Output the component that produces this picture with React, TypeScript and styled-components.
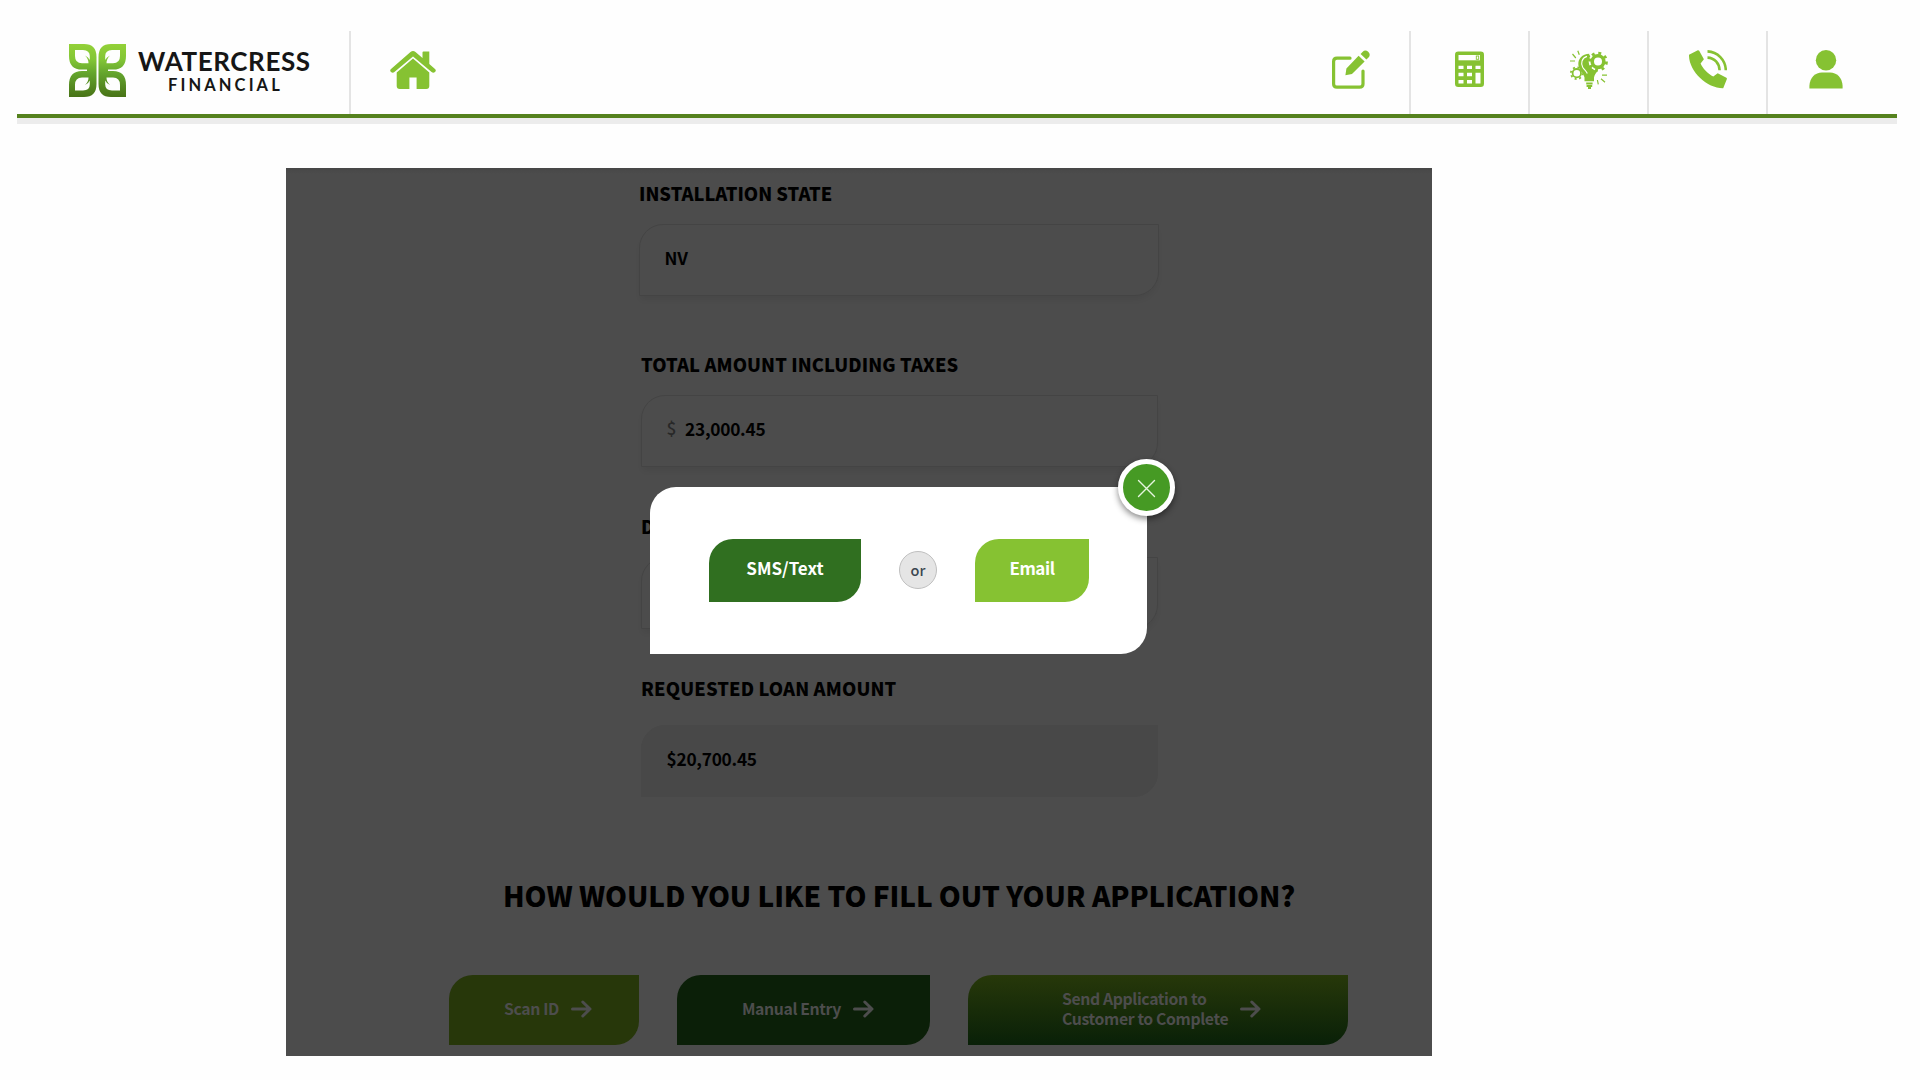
import React from "react";
import styled, { createGlobalStyle } from "styled-components";

const GlobalStyle = createGlobalStyle`
  * { box-sizing: border-box; }
  body {
    margin: 0;
    background: #fefefe;
    font-family: "Noto Sans CJK SC", "Noto Sans", sans-serif;
  }
`;

const GREEN = "#86c232";

const Page = styled.div`
  width: 1920px;
  height: 1080px;
  overflow: hidden;
  padding: 31px 23px 0 17px;
`;

const Header = styled.header`
  display: flex;
  height: 87px;
  border-bottom: 4px solid #55821e;
  box-shadow: 0 6px 0 #ececec;
`;

const Brand = styled.div`
  display: flex;
  width: 334px;
  padding: 13px 0 0 52px;
  gap: 12px;
  border-right: 2px solid #e4e4e4;
`;

const BrandText = styled.div`
  display: flex;
  flex-direction: column;
  font-family: Lato, sans-serif;
  color: #161616;
  white-space: nowrap;
`;

const BrandName = styled.span`
  font-size: 26px;
  font-weight: 700;
  line-height: 30px;
  letter-spacing: 0.6px;
  margin-top: 2px;
`;

const BrandSub = styled.span`
  font-size: 16.5px;
  font-weight: 700;
  line-height: 20px;
  letter-spacing: 3.1px;
  margin: -1px 0 0 30px;
`;

const HomeLink = styled.a`
  padding: 20px 0 0 39px;
  flex: 1;
`;

const Nav = styled.nav`
  display: flex;
`;

const NavItem = styled.a<{ $first?: boolean }>`
  display: flex;
  width: 119px;
  justify-content: center;
  padding: 19px 0 0;
  border-left: 2px solid ${(p) => (p.$first ? "transparent" : "#e4e4e4")};
  &:last-child { width: 131px; padding-right: 14px; }
`;

const Panel = styled.main`
  position: relative;
  width: 1146px;
  height: 888px;
  margin: 50px 0 0 269px;
  padding-top: 13px;
  background: linear-gradient(#474747, #4c4c4c 6px);
  color: #000;
`;

const Form = styled.form`
  display: flex;
  flex-direction: column;
  width: 520px;
  margin-left: 353px;
`;

const Field = styled.div<{ $h: number; $inset?: boolean }>`
  height: ${(p) => p.$h}px;
  padding: ${(p) => (p.$inset ? "0 1px 0 2px" : "0")};
`;

const Label = styled.div<{ $ls?: number }>`
  font-size: 18.3px;
  font-weight: 900;
  line-height: 24px;
  letter-spacing: ${(p) => p.$ls ?? 0}px;
  white-space: nowrap;
`;

const Control = styled.div<{ $gap?: number; $filled?: boolean }>`
  display: flex;
  align-items: center;
  height: 72.5px;
  margin-top: ${(p) => p.$gap ?? 18.5}px;
  padding: 0 0 3px 24.5px;
  border: 1.5px solid ${(p) => (p.$filled ? "#484848" : "#444")};
  border-radius: 24px 0 24px 0;
  background: ${(p) => (p.$filled ? "#484848" : "transparent")};
  box-shadow: ${(p) => (p.$filled ? "none" : "0 5px 6px -2px rgba(0, 0, 0, 0.07)")};
  font-size: 17.3px;
  font-weight: 700;
  line-height: 24px;
`;

const Value = styled.span`
  letter-spacing: -0.25px;
`;

const Currency = styled.span`
  width: 18.5px;
  margin-bottom: 2px;
  color: #282828;
  font-weight: 500;
`;

const Question = styled.h2`
  margin: 0 0 0 217px;
  padding-top: 1px;
  font-size: 28px;
  font-weight: 900;
  line-height: 40px;
  letter-spacing: -0.08px;
  white-space: nowrap;
`;

const Choices = styled.div`
  display: flex;
  gap: 38px;
  margin: 60px 0 0 163px;
`;

const Choice = styled.button<{ $w: number; $bg: string; $pad: number }>`
  display: flex;
  align-items: center;
  width: ${(p) => p.$w}px;
  height: 70px;
  padding: 0 0 2px ${(p) => p.$pad}px;
  gap: 12px;
  border: 0;
  border-radius: 24px 0 24px 0;
  background: ${(p) => p.$bg};
  color: #4d4d4d;
  font: 700 15.8px/20.3px "Noto Sans CJK SC", "Noto Sans", sans-serif;
  letter-spacing: -0.38px;
  text-align: left;
  white-space: nowrap;
`;

const Dialog = styled.section`
  position: absolute;
  left: 364px;
  top: 319px;
  width: 497px;
  height: 166.5px;
  padding: 51.5px 0 0 59px;
  display: flex;
  align-items: flex-start;
  border-radius: 26px 0 26px 0;
  background: #fff;
`;

const DialogButton = styled.button<{ $w: number; $bg: string; $ls: number }>`
  width: ${(p) => p.$w}px;
  height: 63.5px;
  padding: 0 0 4px;
  border: 0;
  border-radius: 24px 0 24px 0;
  background: ${(p) => p.$bg};
  color: #fff;
  font: 700 17px/24px "Noto Sans CJK SC", "Noto Sans", sans-serif;
  letter-spacing: ${(p) => p.$ls}px;
`;

const Or = styled.span`
  display: flex;
  align-items: center;
  justify-content: center;
  width: 38px;
  height: 38px;
  margin: 12.5px 38px 0;
  padding-bottom: 1px;
  border: 1.5px solid #bfbfbf;
  border-radius: 50%;
  background: #e5e5e5;
  color: #3c4650;
  font-size: 14.5px;
  font-weight: 500;
  line-height: 20px;
`;

const Close = styled.button`
  position: absolute;
  right: -28px;
  top: -28px;
  width: 57px;
  height: 57px;
  padding: 2px 0 0;
  display: flex;
  align-items: center;
  justify-content: center;
  border: 5px solid #fff;
  border-radius: 50%;
  background: #469a24;
  box-shadow: 0 3px 6px rgba(0, 0, 0, 0.45);
`;

const leaf =
  "M0 0H15Q27.5 0 27.5 13V40Q27.5 53 15 53H0V41Q0 27 13 27H18V25.6H13Q0 25.6 0 12Z" +
  "M6 6V12Q6 19.3 13 19.3H19.5Q19.6 15 16 11.5Q19.5 13 20.8 16V12Q20.8 6.3 14 6Z" +
  "M6 46.5V41Q6 33.5 13 33.5H19.5Q19.6 37.5 16 41Q19.5 39.5 20.8 36.5V40.5Q20.8 46.3 14 46.5Z";

const LogoMark = () => (
  <svg width="57" height="53" viewBox="0 0 57 53">
    <defs>
      <linearGradient id="leafFill" gradientUnits="userSpaceOnUse" x1="0" y1="0" x2="0" y2="53">
        <stop offset="0" stopColor="#93d138" />
        <stop offset="0.3" stopColor="#82c536" />
        <stop offset="0.55" stopColor="#64a52d" />
        <stop offset="1" stopColor="#487317" />
      </linearGradient>
    </defs>
    <path d={leaf} fill="url(#leafFill)" fillRule="evenodd" />
    <path d={leaf} fill="url(#leafFill)" fillRule="evenodd" transform="translate(57 0) scale(-1 1)" />
  </svg>
);

const HomeIcon = () => (
  <svg width="46" height="38" viewBox="0 0 46 38" fill={GREEN}>
    <path d="M23 0Q24.3 0 25.5 1L32.5 7V1.5Q32.5.5 33.5.5H39.3V13L45 18Q46.6 19.6 45 21Q43.3 22.6 41.6 21L23 5.5L4.4 21Q2.7 22.6 1 21Q-.6 19.6 1 18L20.5 1Q21.7 0 23 0Z" />
    <path d="M23 7.6L39.3 21.6V35Q39.3 38 36.3 38H26.6V26.5H19.4V38H9.7Q6.7 38 6.7 35V21.6Z" />
  </svg>
);

const EditIcon = () => (
  <svg width="38" height="39" viewBox="0 0 38 39" fill={GREEN}>
    <path d="M18 8.2H5Q1.6 8.2 1.6 11.6V34Q1.6 37.2 5 37.2H27.5Q31 37.2 31 34V21" fill="none" stroke={GREEN} strokeWidth="3.2" strokeLinecap="round" />
    <path d="M26.6 5.8L32.6 11.6L20 24L13.4 25.2L14.4 18.4ZM28.6 4L30.5 2Q33.2-.7 36.2 1.7Q39.1 4.5 36.5 7.5L34.4 9.6Z" />
  </svg>
);

const CalculatorIcon = () => (
  <svg width="29" height="37" viewBox="0 0 29 37">
    <rect y="1.5" width="29" height="35.5" rx="3.3" fill={GREEN} />
    <g fill="#fff">
      <path d="M3.5 5H25V10.3H3.5Z" />
      <path d="M3.5 15.8H8.5V19H3.5ZM12 15.8H17V19H12ZM20.5 15.8H25.5V19H20.5ZM3.5 22.8H8.5V26.3H3.5ZM12 22.8H17V26.3H12ZM3.5 30H8.5V33.5H3.5ZM12 30H17V33.5H12ZM20.5 22.8H25.5V33.5H20.5Z" />
    </g>
    <rect x="21.3" y="6" width="2.4" height="3.3" fill="none" stroke={GREEN} strokeWidth="0.9" />
  </svg>
);

const IdeaIcon = () => (
  <svg width="38" height="39" viewBox="0 0 38 39" fill="none" stroke={GREEN}>
    <circle cx="6.8" cy="23.2" r="4.2" strokeWidth="1.8" />
    <circle cx="6.8" cy="23.2" r="5.9" strokeWidth="1.8" strokeDasharray="2 2.63" />
    <path d="M19.5 3.7C12 3.7 7.7 9 8.4 15.2C9 20.5 13.4 22.3 14.5 27.5V31.3H24V27.5C24.4 25 26 23 28 20.5L19 4Z" fill={GREEN} stroke="none" />
    <path d="M17 6.4C11.6 8 10.6 13.5 12.7 17.2C14.4 20 16.4 21 17.3 23.5" stroke="#fff" strokeWidth="1.1" />
    <circle cx="28" cy="11.6" r="9.4" fill="#fff" stroke="none" />
    <circle cx="28" cy="11.6" r="5.8" strokeWidth="3.6" />
    <circle cx="28" cy="11.6" r="8.5" strokeWidth="2.8" strokeDasharray="2.9 3.78" />
    <path d="M16.5 16L19.5 19L23 21.5L20.5 28" strokeWidth="3.4" />
    <path d="M16.2 33.5H22.6M16.6 36H22.2M18 38H21" strokeWidth="1.8" />
    <path d="M7.8.8L9.3 4.8M2.5 4L5.8 8M0 11H5M32 25.2H37M31 28.7L35 32.3M27.4 30L28.3 34.3" strokeWidth="1.2" />
  </svg>
);

const PhoneIcon = () => (
  <svg width="38" height="39" viewBox="0 0 38 39" fill={GREEN}>
    <path d="M0 4.7L8.8.3Q9.6 0 10.2.8L14.9 9.3L11.6 13.6C13.4 18.2 19 24 24.3 26.6L28.7 23.2L37.4 27.8Q38.2 28.4 37.8 29.2L34.2 38.2C18 38.4-.5 21 0 4.7Z" />
    <path d="M18.5 1.4C28.5 1.8 36.6 10 36.8 20.3M18.5 7.6C25.5 7.8 30.4 13.3 30.6 20.3" fill="none" stroke={GREEN} strokeWidth="2.6" />
  </svg>
);

const UserIcon = () => (
  <svg width="34" height="39" viewBox="0 0 34 39" fill={GREEN}>
    <circle cx="17" cy="10.3" r="10.2" />
    <path d="M.4 38.5V36C.8 27.5 6.2 22.6 13 22.6H21C27.8 22.6 33.2 27.5 33.6 36V38.5Z" />
  </svg>
);

const Arrow = () => (
  <svg width="21" height="18" viewBox="0 0 21 18" fill="none" stroke="#4d4d4d" strokeWidth="3" strokeLinecap="round" strokeLinejoin="round">
    <path d="M1.5 9H18.7M11.8 2L19 9L11.8 16" />
  </svg>
);

export default function App() {
  return (
    <Page>
      <GlobalStyle />
      <Header>
        <Brand>
          <LogoMark />
          <BrandText>
            <BrandName>WATERCRESS</BrandName>
            <BrandSub>FINANCIAL</BrandSub>
          </BrandText>
        </Brand>
        <HomeLink><HomeIcon /></HomeLink>
        <Nav>
          <NavItem $first><EditIcon /></NavItem>
          <NavItem><CalculatorIcon /></NavItem>
          <NavItem><IdeaIcon /></NavItem>
          <NavItem><PhoneIcon /></NavItem>
          <NavItem><UserIcon /></NavItem>
        </Nav>
      </Header>
      <Panel>
        <Form>
          <Field $h={171}>
            <Label>INSTALLATION STATE</Label>
            <Control><Value>NV</Value></Control>
          </Field>
          <Field $h={162} $inset>
            <Label $ls={0.08}>TOTAL AMOUNT INCLUDING TAXES</Label>
            <Control><Currency>$</Currency><Value>23,000.45</Value></Control>
          </Field>
          <Field $h={162} $inset>
            <Label>D</Label>
            <Control />
          </Field>
          <Field $h={198} $inset>
            <Label $ls={0.12}>REQUESTED LOAN AMOUNT</Label>
            <Control $gap={24.5} $filled><Value>$20,700.45</Value></Control>
          </Field>
        </Form>
        <Question>HOW WOULD YOU LIKE TO FILL OUT YOUR APPLICATION?</Question>
        <Choices>
          <Choice $w={190} $bg="#27370a" $pad={55}>Scan ID<Arrow /></Choice>
          <Choice $w={253} $bg="#0b1f08" $pad={65}>Manual Entry<Arrow /></Choice>
          <Choice $w={380} $bg="linear-gradient(#27380a, #092008)" $pad={94}>
            <span>Send Application to<br />Customer to Complete</span>
            <Arrow />
          </Choice>
        </Choices>
        <Dialog>
          <DialogButton $w={152} $bg="#306f20" $ls={0}>SMS/Text</DialogButton>
          <Or>or</Or>
          <DialogButton $w={114} $bg={GREEN} $ls={-0.45}>Email</DialogButton>
          <Close>
            <svg width="19" height="19" viewBox="0 0 19 19" stroke="#e6f5df" strokeWidth="1.4" strokeLinecap="round">
              <path d="M1.5 1.5L17.5 17.5M17.5 1.5L1.5 17.5" />
            </svg>
          </Close>
        </Dialog>
      </Panel>
    </Page>
  );
}
